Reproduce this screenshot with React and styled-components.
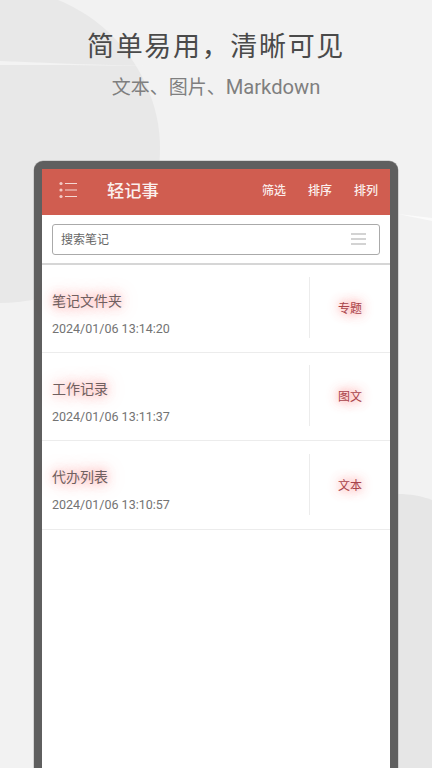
import React from "react";
import styled, { createGlobalStyle } from "styled-components";

const Global = createGlobalStyle`
  html, body { margin: 0; padding: 0; background: #f2f2f2; }
  * { box-sizing: border-box; }
`;
const Page = styled.div`
  position: relative; width: 432px; height: 768px; overflow: hidden;
  background: #f2f2f2; display: flex; flex-direction: column;
  font-family: "Noto Sans CJK SC", Roboto, sans-serif;
`;
const Backdrop = styled.svg`
  position: absolute; inset: 0; width: 432px; height: 768px;
`;
const Hero = styled.header`
  position: relative; height: 161px; padding-top: 24px; display: flex; flex-direction: column; align-items: center;
`;
const Title = styled.h1`
  margin: 0; font-size: 27px; line-height: 42px; font-weight: 400; letter-spacing: 1.67px; color: #4a4a4a; white-space: nowrap;
`;
const Subtitle = styled.p`
  margin: 6px 0 0; font-size: 19px; line-height: 28px; font-weight: 400; color: #7f7f7f; white-space: nowrap;
`;
const Latin = styled.span`
  font-family: Roboto, sans-serif; font-size: 20.2px;
`;
const Device = styled.section`
  position: relative; flex: 1; margin: 0 34px -2px; border: 8px solid #5f5f5f; border-bottom: 0;
  border-radius: 9px 9px 0 0; background: #fff; display: flex; flex-direction: column;
  box-shadow: 0 0 0 .5px #b5b5b5;
`;
const AppBar = styled.div`
  height: 46px; background: #d05d50; display: flex; align-items: center; padding: 0 12px 4px 17px; color: #fbeeec;
`;
const AppTitle = styled.div`
  margin-left: 30px; font-size: 17.3px; font-weight: 500; color: #fbf0ee; flex: 1; line-height: 24px;
`;
const Action = styled.span`
  font-size: 12px; font-weight: 500; line-height: 18px; margin-left: 22px; color: #fbeeec;
`;
const SearchArea = styled.div`
  padding: 9px 10px 8px; border-bottom: 2px solid #d6d6d6;
`;
const SearchBox = styled.div`
  height: 31px; border: 1px solid #aaa; border-radius: 3px; display: flex; align-items: center; justify-content: space-between;
  padding: 0 13px 2px 8px; font-size: 12px; color: #666;
`;
const Row = styled.article`
  height: ${p => p.$h}px; border-bottom: 1px solid #ececec; display: flex; align-items: center; padding: 0 0 0 10px;
`;
const Info = styled.div`
  flex: 1; display: flex; flex-direction: column; padding-top: 11px;
`;
const Name = styled.div`
  font-size: 14px; line-height: 20px; color: #6f6060; align-self: flex-start;
  text-shadow: 0 0 9px rgba(255,120,120,.5), 0 0 14px rgba(255,120,120,.45), 0 0 20px rgba(255,130,130,.35);
`;
const Stamp = styled.div`
  margin-top: 9px; font-family: Roboto, sans-serif; font-size: 12.5px; line-height: 20px; color: #737373;
`;
const Tag = styled.div`
  width: 81px; height: 61px; border-left: 1px solid #ececec; display: flex; align-items: center; justify-content: center;
  font-size: 12px; color: #a8434a; margin-bottom: 2px;
  text-shadow: 0 0 8px rgba(255,90,90,.5), 0 0 12px rgba(255,90,90,.4), 0 0 16px rgba(255,110,110,.3);
`;

const MenuIcon = () => (
  <svg width="18" height="18" viewBox="0 0 18 18" fill="none">
    <g fill="#f3c9c3"><circle cx="2" cy="2.5" r="1.6" /><circle cx="2" cy="9" r="1.6" /><circle cx="2" cy="15.5" r="1.6" /></g>
    <g stroke="#f5d8d3" strokeWidth="1"><path d="M6 2.5h12M6 9h12M6 15.5h12" /></g>
  </svg>
);
const LinesIcon = () => (
  <svg width="15" height="12" viewBox="0 0 15 12" fill="none" stroke="#a8a8a8" strokeWidth="1.2">
    <path d="M0 1h15M0 6h15M0 11h15" />
  </svg>
);

const notes = [
  { name: "笔记文件夹", time: "2024/01/06 13:14:20", tag: "专题", h: 88 },
  { name: "工作记录", time: "2024/01/06 13:11:37", tag: "图文", h: 88 },
  { name: "代办列表", time: "2024/01/06 13:10:57", tag: "文本", h: 89 },
];

export default function App() {
  return (
    <Page>
      <Global />
      <Backdrop viewBox="0 0 432 768" aria-hidden="true">
        <path d="M0 0H58C118 24 160 84 160 148C160 236 96 302 0 303Z" fill="#e8e8e8" />
        <path d="M0 61C50 63 100 65 148 66C90 65 40 65 0 65Z" fill="#f3f3f3" />
        <path d="M398 214L432 218V221Z" fill="#fbfbfb" />
        <path d="M398 494C410 494 422 496 432 500V768H398Z" fill="#e6e6e6" />
      </Backdrop>
      <Hero>
        <Title>{"简单易用\uFF0C清晰可见"}</Title>
        <Subtitle>文本、图片、<Latin>Markdown</Latin></Subtitle>
      </Hero>
      <Device>
        <AppBar>
          <MenuIcon />
          <AppTitle>轻记事</AppTitle>
          <Action>筛选</Action>
          <Action>排序</Action>
          <Action>排列</Action>
        </AppBar>
        <SearchArea>
          <SearchBox>
            <span>搜索笔记</span>
            <LinesIcon />
          </SearchBox>
        </SearchArea>
        {notes.map(n => (
          <Row key={n.name} $h={n.h}>
            <Info>
              <Name>{n.name}</Name>
              <Stamp>{n.time}</Stamp>
            </Info>
            <Tag>{n.tag}</Tag>
          </Row>
        ))}
      </Device>
    </Page>
  );
}
